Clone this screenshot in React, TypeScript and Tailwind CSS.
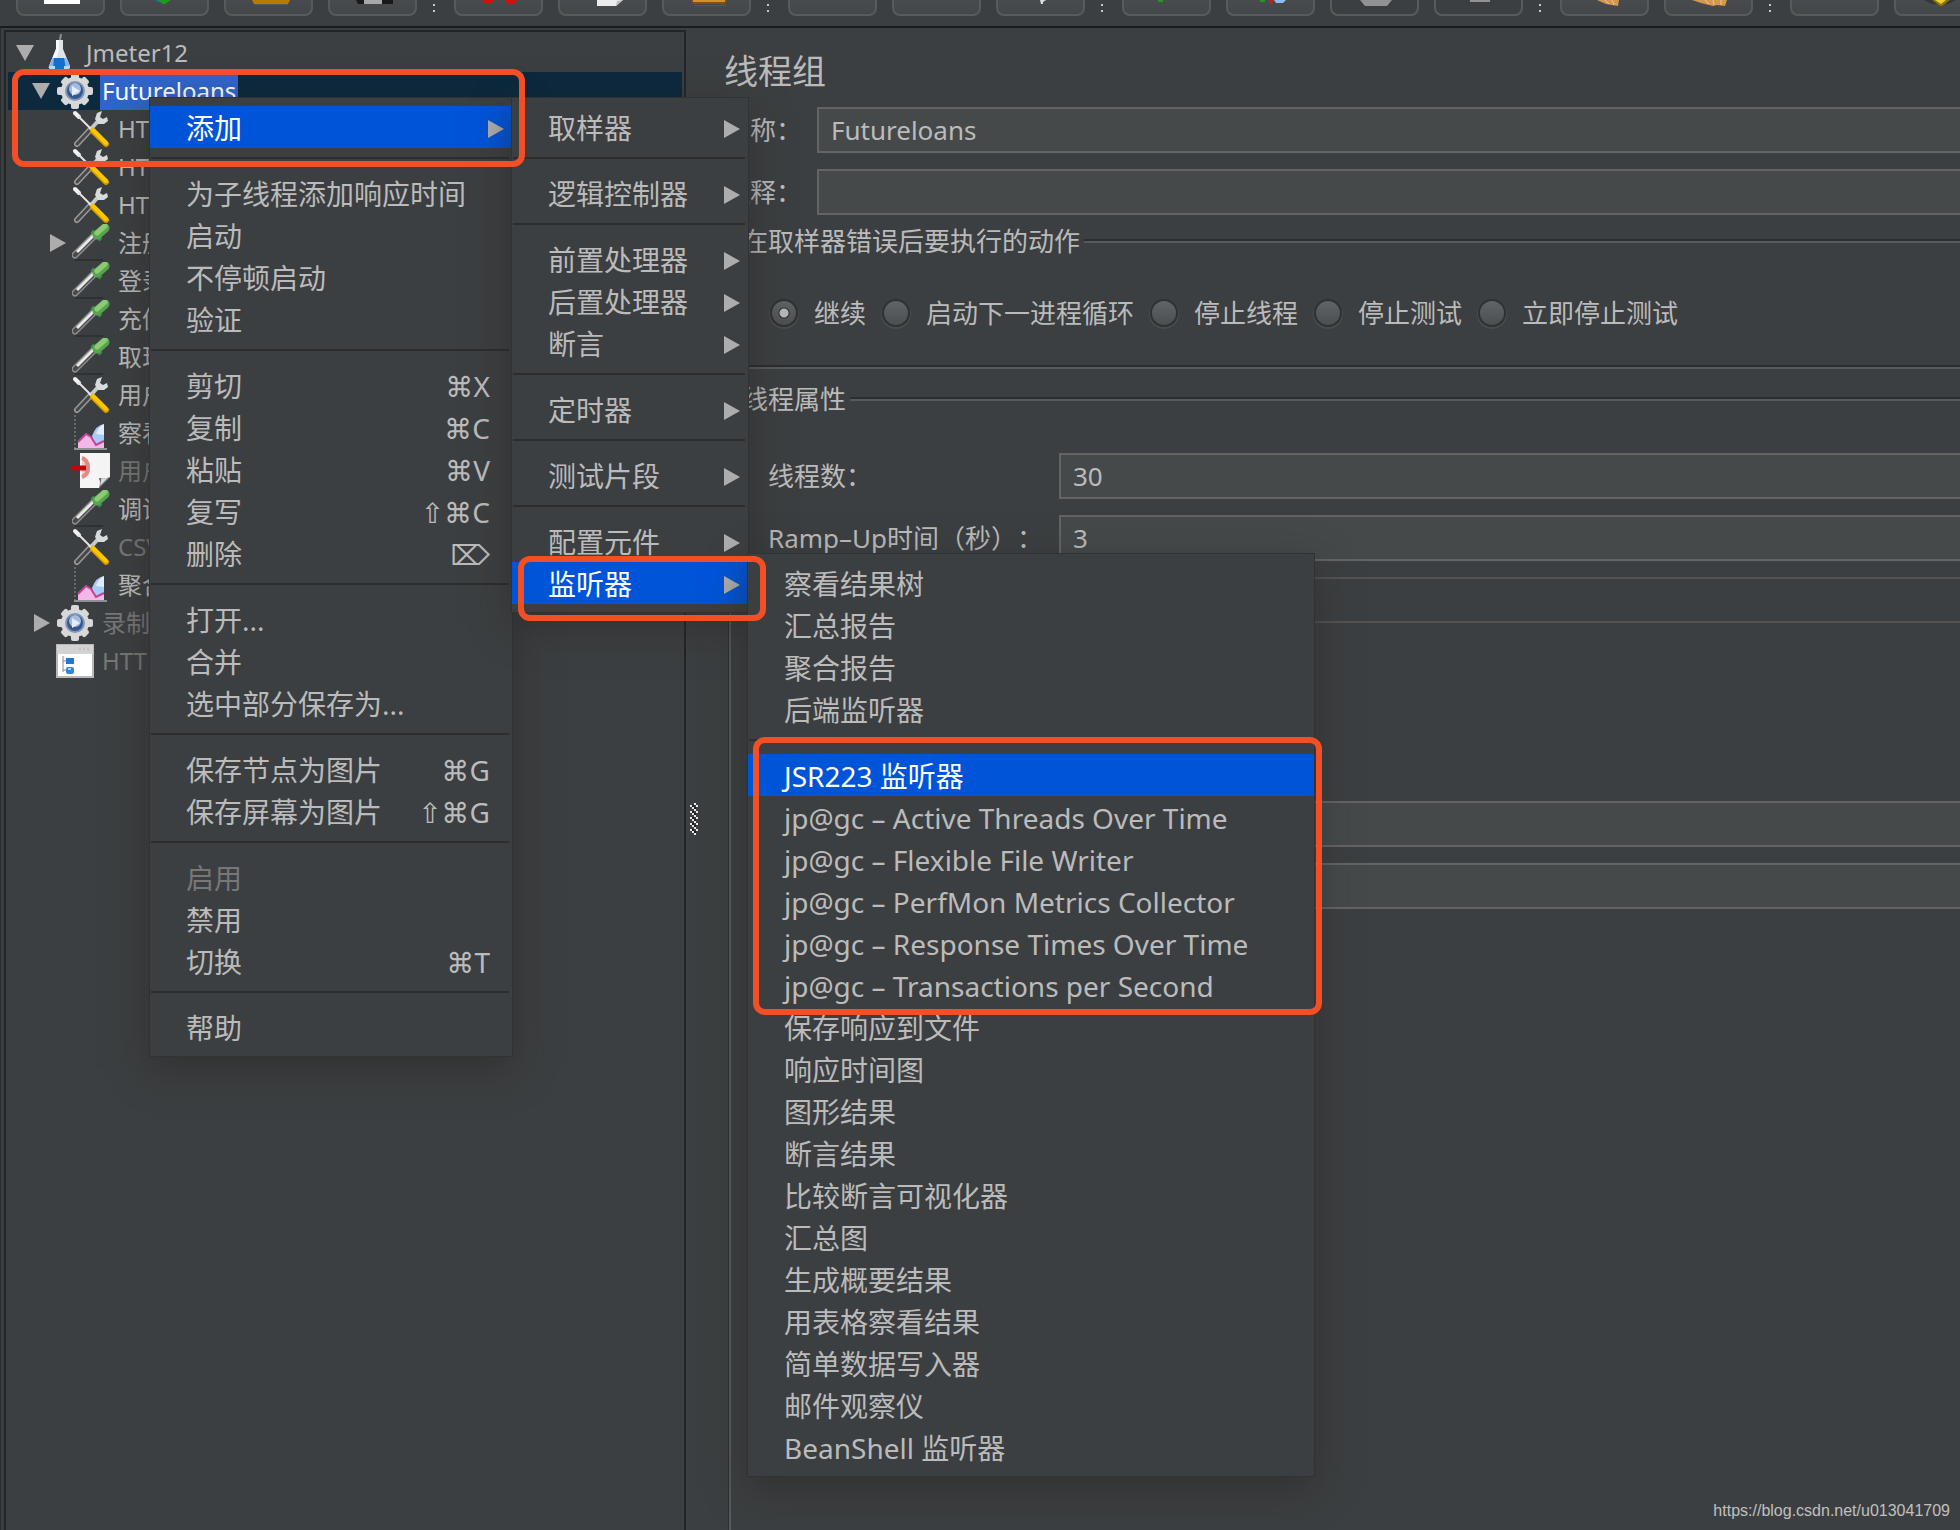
import React from "react";
import clsx from "clsx";

type IconName = "flask" | "gear" | "tools" | "dropper" | "chart" | "page" | "window";

interface ITreeNode {
  label: string;
  icon: IconName;
  level: 0 | 1 | 2;
  arrow?: "down" | "right";
  selected?: boolean;
  disabled?: boolean;
}

interface IMenuItem {
  label: string;
  shortcut?: string;
  submenu?: boolean;
  active?: boolean;
  disabled?: boolean;
}

const treeNodes: ITreeNode[] = [
  { label: "Jmeter12", icon: "flask", level: 0, arrow: "down" },
  { label: "Futureloans", icon: "gear", level: 1, arrow: "down", selected: true },
  { label: "HTTP", icon: "tools", level: 2 },
  { label: "HTTP", icon: "tools", level: 2 },
  { label: "HTTP", icon: "tools", level: 2 },
  { label: "注册", icon: "dropper", level: 2, arrow: "right" },
  { label: "登录", icon: "dropper", level: 2 },
  { label: "充值", icon: "dropper", level: 2 },
  { label: "取现", icon: "dropper", level: 2 },
  { label: "用户", icon: "tools", level: 2 },
  { label: "察看", icon: "chart", level: 2 },
  { label: "用户", icon: "page", level: 2, disabled: true },
  { label: "调试", icon: "dropper", level: 2 },
  { label: "CSV", icon: "tools", level: 2, disabled: true },
  { label: "聚合", icon: "chart", level: 2 },
  { label: "录制", icon: "gear", level: 1, arrow: "right", disabled: true },
  { label: "HTTP", icon: "window", level: 1, disabled: true },
];

// every inner array is one group, groups are split by a separator line
const contextMenu: IMenuItem[][] = [
  [{ label: "添加", submenu: true, active: true }],
  [
    { label: "为子线程添加响应时间" },
    { label: "启动" },
    { label: "不停顿启动" },
    { label: "验证" },
  ],
  [
    { label: "剪切", shortcut: "⌘X" },
    { label: "复制", shortcut: "⌘C" },
    { label: "粘贴", shortcut: "⌘V" },
    { label: "复写", shortcut: "⇧⌘C" },
    { label: "删除", shortcut: "⌦" },
  ],
  [{ label: "打开..." }, { label: "合并" }, { label: "选中部分保存为..." }],
  [
    { label: "保存节点为图片", shortcut: "⌘G" },
    { label: "保存屏幕为图片", shortcut: "⇧⌘G" },
  ],
  [
    { label: "启用", disabled: true },
    { label: "禁用" },
    { label: "切换", shortcut: "⌘T" },
  ],
  [{ label: "帮助" }],
];

const addMenu: IMenuItem[][] = [
  [{ label: "取样器", submenu: true }],
  [{ label: "逻辑控制器", submenu: true }],
  [
    { label: "前置处理器", submenu: true },
    { label: "后置处理器", submenu: true },
    { label: "断言", submenu: true },
  ],
  [{ label: "定时器", submenu: true }],
  [{ label: "测试片段", submenu: true }],
  [
    { label: "配置元件", submenu: true },
    { label: "监听器", submenu: true, active: true },
  ],
];

const listenerMenu: IMenuItem[][] = [
  [
    { label: "察看结果树" },
    { label: "汇总报告" },
    { label: "聚合报告" },
    { label: "后端监听器" },
  ],
  [
    { label: "JSR223 监听器", active: true },
    { label: "jp@gc – Active Threads Over Time" },
    { label: "jp@gc – Flexible File Writer" },
    { label: "jp@gc – PerfMon Metrics Collector" },
    { label: "jp@gc – Response Times Over Time" },
    { label: "jp@gc – Transactions per Second" },
    { label: "保存响应到文件" },
    { label: "响应时间图" },
    { label: "图形结果" },
    { label: "断言结果" },
    { label: "比较断言可视化器" },
    { label: "汇总图" },
    { label: "生成概要结果" },
    { label: "用表格察看结果" },
    { label: "简单数据写入器" },
    { label: "邮件观察仪" },
    { label: "BeanShell 监听器" },
  ],
];

const errorActions = ["继续", "启动下一进程循环", "停止线程", "停止测试", "立即停止测试"];

const NodeIcon = ({ name }: { name: IconName }) => {
  switch (name) {
    case "flask":
      return (
        <>
          <path d="M20 6 L21 0" stroke="#8d8f90" strokeWidth="2" />
          <path d="M16 6 h7 v9 l7 17 q0 3 -2 3 h-17 q-3 0 -2 -3 l7 -17z" fill="#dfe3e8" />
          <path d="M16 6 h3 v10 l-4 14 h-5 l6 -15z" fill="#f7f8fa" />
          <path d="M12.500 24 h13.500 l4 8 q0 3 -2 3 h-17 q-3 0 -2 -3z" fill="#7fb4ee" />
          <path d="M14 24 h10 l2 11 h-13z" fill="#1270d0" />
          <path d="M9 32 q0 3 2 3 h4 v-3z M24 32 h6 q0 3 -2 3 h-4z" fill="#b9d7f7" />
        </>
      );
    case "gear":
      return (
        <>
          <g fill="#d8d8d8">
            <rect x="15" y="1" width="8" height="36" rx="2" />
            <rect x="1" y="15" width="36" height="8" rx="2" />
            <rect x="15" y="2" width="8" height="34" rx="2" transform="rotate(45 19 19)" />
            <rect x="15" y="2" width="8" height="34" rx="2" transform="rotate(-45 19 19)" />
            <circle cx="19" cy="19" r="14" />
          </g>
          <circle cx="19" cy="19" r="10" fill="#8296b8" />
          <circle cx="19" cy="19" r="8" fill="#34588f" />
          <circle cx="19" cy="17" r="6" fill="#a3bbdf" />
          <path d="M16 14 L24 19 L16 24z" fill="#e9eef6" />
        </>
      );
    case "tools":
      return (
        <>
          <path d="M5 34 L18 20" stroke="#9a9a9a" strokeWidth="6" strokeLinecap="round" />
          <path d="M5 34 L19 19" stroke="#474747" strokeWidth="3" strokeLinecap="round" />
          <path d="M18 20 L27 10" stroke="#c9c9c9" strokeWidth="4" />
          <path d="M30 1 L25 3 L23 9 L26 14 L32 14 L36 11 L35 7 L31 9 L28 7z" fill="#d9dcdd" />
          <path d="M3 3 L7 7" stroke="#f2f2f2" strokeWidth="4" strokeLinecap="round" />
          <path d="M6 6 L20 20" stroke="#e4e4e4" strokeWidth="2" />
          <path d="M21 21 L34 34" stroke="#d59b00" strokeWidth="6" strokeLinecap="round" />
          <path d="M21 20 L34 33" stroke="#fdc800" strokeWidth="4" strokeLinecap="round" />
        </>
      );
    case "dropper":
      return (
        <>
          <path d="M3 36 h28" stroke="#2f3133" strokeWidth="2" />
          <path d="M3 31 L23 11" stroke="#8d8d8d" strokeWidth="7" strokeLinecap="round" />
          <path d="M3 31 L23 11" stroke="#4a4a4a" strokeWidth="4" strokeLinecap="round" />
          <path d="M5 28 L23 10" stroke="#e9e9e9" strokeWidth="3" />
          <path d="M20 7 L29 16" stroke="#3f8f42" strokeWidth="4" />
          <path d="M25 11 L33 4" stroke="#57a64f" strokeWidth="9" strokeLinecap="round" />
          <path d="M25 9 L33 2" stroke="#8fcb76" strokeWidth="5" strokeLinecap="round" />
        </>
      );
    case "chart":
      return (
        <>
          <path d="M3 1 V34" stroke="#67696b" strokeWidth="2" strokeDasharray="2 2" />
          <path d="M2 35 H35" stroke="#8e9092" strokeWidth="2" />
          <path d="M32 10 q-8 1 -12 12 l3 12 h9z" fill="#a9cbfb" />
          <path d="M32 10 q-6 3 -8 10 l8 1z" fill="#e1eefe" />
          <path d="M6 34 v-6 l8 -8 l6 4 l5 7 l7 -3 v6z" fill="#f3b7e8" />
          <path d="M6 28 l8 -8 l5 3 l5 8 l8 -4" fill="none" stroke="#c2438f" strokeWidth="2" />
        </>
      );
    case "page":
      return (
        <>
          <path d="M8 1 h30 v24 l-11 11 h-19z" fill="#f5f5f5" />
          <path d="M27 36 q2 -5 0 -10 q6 2 11 -1z" fill="#4a4a4a" />
          <path d="M28 34 l1 -7 l7 -1z" fill="#dcdcdc" />
          <path d="M10 5 q8 2 8 11 q0 8 -8 10" fill="#f6c9c4" />
          <path d="M10 6 q6 2 6 10 q0 7 -6 9" fill="none" stroke="#e08a84" strokeWidth="4" />
          <path d="M0 16 h14" stroke="#c00808" strokeWidth="5" />
        </>
      );
    case "window":
      return (
        <>
          <rect x="1" y="3" width="36" height="32" fill="#ffffff" stroke="#b9b9b9" strokeWidth="2" />
          <rect x="1" y="3" width="36" height="9" fill="#d3d3d3" />
          <path d="M23 7 h12" stroke="#c4c4c4" strokeWidth="3" strokeDasharray="2 2" />
          <path d="M7 14 V30 M7 19 h4 M7 28 h4" stroke="#8a8a8a" strokeWidth="1" fill="none" />
          <rect x="10" y="16" width="8" height="6" fill="#1f78d8" />
          <rect x="10" y="25" width="8" height="7" rx="2" fill="#2f86df" />
          <rect x="12" y="26" width="3" height="2" fill="#a7d0f7" />
        </>
      );
  }
};

const TreeRow = ({ node }: { node: ITreeNode }) => (
  <li
    role="treeitem"
    aria-selected={!!node.selected}
    className={clsx(
      "flex h-[38px] items-center",
      node.level === 0 && "pl-2",
      node.level === 1 && "pl-6",
      node.level === 2 && "pl-10",
      node.selected && "bg-[#0d293e]"
    )}
  >
    <svg className="h-5 w-6 shrink-0" viewBox="0 0 24 20" fill="#adadad">
      {node.arrow === "down" && <path d="M0 2 H18 L9 18z" />}
      {node.arrow === "right" && <path d="M2 1 L18 10 L2 19z" />}
    </svg>
    <svg className="mr-1.5 size-[38px] shrink-0" viewBox="0 0 38 38" fill="none">
      <NodeIcon name={node.icon} />
    </svg>
    <span
      className={clsx(
        "px-0.5 text-[24px] leading-[38px] whitespace-nowrap",
        node.selected && "bg-[#2f65ca] text-white",
        node.disabled && "text-[#777777]"
      )}
    >
      {node.label}
    </span>
  </li>
);

const Menu = ({
  groups,
  label,
  className,
}: {
  groups: IMenuItem[][];
  label: string;
  className: string;
}) => (
  <div
    role="menu"
    aria-label={label}
    className={clsx(
      "absolute bg-[#3c3f41] py-2 text-[28px] shadow-[0_0_0_1px_#303234,0_12px_36px_rgba(40,36,34,0.55)]",
      className
    )}
  >
    {groups.map((group, index) => (
      <React.Fragment key={index}>
        {index > 0 && (
          <div role="separator" className="mr-[3px] ml-px h-6 pt-[9px]">
            <div className="h-0.5 bg-[#2d2d2d]"></div>
          </div>
        )}
        {group.map((item) => (
          <button
            key={item.label}
            type="button"
            role="menuitem"
            disabled={item.disabled}
            className={clsx(
              "flex h-[42px] w-full items-center justify-between pt-0.5 pl-9 text-left leading-10 whitespace-nowrap",
              item.submenu ? "pr-2" : "pr-[22px]",
              item.active && "bg-[#0054d8] text-white",
              item.disabled && "text-[#777777]"
            )}
          >
            <span>{item.label}</span>
            {item.shortcut && (
              <span className="font-['Noto_Sans','DejaVu_Sans',sans-serif]">{item.shortcut}</span>
            )}
            {item.submenu && (
              <svg className="h-5 w-4" viewBox="0 0 16 20" fill="#adadad">
                <path d="M0 2 L16 11 L0 20z" />
              </svg>
            )}
          </button>
        ))}
      </React.Fragment>
    ))}
  </div>
);

const ToolButton = ({
  label,
  disabled,
  children,
}: {
  label: string;
  disabled?: boolean;
  children?: React.ReactNode;
}) => (
  <button
    type="button"
    aria-label={label}
    disabled={disabled}
    className={clsx(
      "flex h-10 w-[89px] shrink-0 items-end rounded-lg border-2 border-[#585a5b]",
      !disabled && "bg-linear-to-b from-[#4e5254] to-[#434749]"
    )}
  >
    <svg className="h-[14px] w-[85px]" viewBox="0 0 85 14">
      {children}
    </svg>
  </button>
);

const ToolDivider = () => (
  <svg className="h-4 w-[7px] shrink-0" viewBox="0 0 7 16" fill="#c8c8c8">
    <path d="M1 4 h2 v2 h-2z M1 10 h2 v2 h-2z" />
  </svg>
);

const Toolbar = () => (
  <header className="flex h-7 shrink-0 items-end gap-[15px] overflow-hidden border-b-2 border-[#1a1d1f] pb-[10px] pl-4">
    <ToolButton label="新建">
      <path d="M26 0 h36 v4 h-36z" fill="#ffffff" />
    </ToolButton>
    <ToolButton label="模板">
      <path d="M33 0 h6 v2 h-4z" fill="#1d5fae" />
      <path d="M35 0 h14 l-6 4 h-2z" fill="#1e9a1e" />
    </ToolButton>
    <ToolButton label="打开">
      <path d="M28 4 h34 v1 h-34z" fill="#55585a" />
      <path d="M26 0 h38 l-2 4 h-34z" fill="#b87a05" />
    </ToolButton>
    <ToolButton label="保存">
      <path d="M26 0 h37 v4 h-35z" fill="#191919" />
      <path d="M34 0 h18 v4 h-18z" fill="#a8a8a8" />
    </ToolButton>
    <ToolDivider />
    <ToolButton label="剪切">
      <path d="M26 0 h12 l-3 4 h-6z M49 0 h12 l-3 4 h-6z" fill="#d41010" />
    </ToolButton>
    <ToolButton label="复制">
      <path d="M37 0 h26 l-7 6 h-19z" fill="#ececec" />
      <path d="M56 6 l1 -5 l6 -1z" fill="#bdbdbd" />
    </ToolButton>
    <ToolButton label="粘贴">
      <path d="M30 5 h32 v1 h-32z" fill="#55585a" />
      <path d="M27 0 h36 l-2 4 h-32z" fill="#8a4f05" />
      <path d="M29 0 h32 v2 h-32z" fill="#cf9030" />
    </ToolButton>
    <ToolDivider />
    <ToolButton label="展开" />
    <ToolButton label="折叠" />
    <ToolButton label="切换">
      <path d="M42 0 h6 l-3 2 v2 h-2z" fill="#dcdcdc" />
    </ToolButton>
    <ToolDivider />
    <ToolButton label="启动">
      <path d="M34 0 h5 v2 h-5z" fill="#2a9226" />
    </ToolButton>
    <ToolButton label="不停顿启动">
      <path d="M32 0 h5 v2 h-5z" fill="#2a9226" />
      <path d="M41 0 h6 l-5 4z" fill="#c42020" />
      <path d="M46 0 h12 l-3 3 h-7z" fill="#8dbcf0" />
    </ToolButton>
    <ToolButton label="停止" disabled>
      <path d="M28 0 h32 l-5 6 h-22z" fill="#929292" />
    </ToolButton>
    <ToolButton label="关闭" disabled>
      <path d="M34 0 h20 v2 h-20z" fill="#929292" />
    </ToolButton>
    <ToolDivider />
    <ToolButton label="清除">
      <path d="M35 0 h22 l-1 6 l-12 -2z" fill="#d3974f" />
      <path d="M43 0 l4 4 M50 0 l2 5" stroke="#efc58a" />
    </ToolButton>
    <ToolButton label="清除全部">
      <path d="M26 0 h35 l-2 6 l-8 -1 l-4 1 l-12 -3z" fill="#d3974f" />
      <path d="M39 0 l4 4 M47 0 l1 5 M55 0 v5" stroke="#efc58a" />
    </ToolButton>
    <ToolDivider />
    <ToolButton label="搜索" />
    <ToolButton label="重置搜索">
      <path d="M28 0 h32 l-8 4 h-16z" fill="#33363a" />
      <path d="M36 0 h18 l-8 6 h-2z" fill="#8a7408" />
      <path d="M39 0 h11 l-5 4z" fill="#ecd02c" />
    </ToolButton>
  </header>
);

const TextRow = ({
  id,
  label,
  value,
  wide,
}: {
  id: string;
  label: string;
  value?: string;
  wide?: boolean;
}) => (
  <div className="flex h-[46px] items-center">
    <label
      htmlFor={id}
      className={clsx("shrink-0 [text-spacing-trim:space-all]", wide ? "w-[291px]" : "w-[93px]")}
    >
      {label}
    </label>
    <input
      id={id}
      type="text"
      defaultValue={value}
      className="h-full min-w-0 flex-1 border-2 border-[#646464] bg-[#45494a] px-3 outline-none"
    />
  </div>
);

const EmptyRow = ({ label, disabled }: { label: string; disabled?: boolean }) => (
  <div className="flex h-[46px] pl-[291px]">
    <input
      type="text"
      aria-label={label}
      disabled={disabled}
      className={clsx(
        "h-full min-w-0 flex-1 border-2",
        disabled ? "border-[#555352]" : "border-[#646464] bg-[#45494a]"
      )}
    />
  </div>
);

// titled group with an etched line running on from its title
const TitledGroup = ({
  title,
  className,
  children,
}: {
  title: string;
  className: string;
  children: React.ReactNode;
}) => (
  <fieldset
    className={clsx(
      "ml-[5px] min-w-0 border-l-2 border-[#565a5c] pl-[11px] shadow-[-1px_0_0_#2d3032]",
      className
    )}
  >
    <legend className="flex w-full items-center gap-1 leading-[34px]">
      <span>{title}</span>
      <span className="h-1 flex-1 border-t-2 border-b-2 border-t-[#2b2d2f] border-b-[#565a5c]"></span>
    </legend>
    {children}
  </fieldset>
);

const ThreadGroupForm = () => (
  <form className="-mr-4 flex min-w-0 flex-1 flex-col pt-[21px] pl-6">
    <h1 className="mb-3.5 text-[34px] leading-[44px]">线程组</h1>
    <div className="flex flex-col gap-4">
      <TextRow id="name" label="名称：" value="Futureloans" />
      <TextRow id="comment" label="注释：" />
    </div>
    <TitledGroup title="在取样器错误后要执行的动作" className="mt-[9px] border-b-2">
      <div className="flex h-[109px] items-start gap-4 border-b-2 border-[#2b2d2f] pt-[38px] pl-7">
        {errorActions.map((action, index) => (
          <label key={action} className="flex items-center gap-4 whitespace-nowrap">
            <input
              type="radio"
              name="onError"
              defaultChecked={index === 0}
              className="size-7 shrink-0 appearance-none rounded-full border-2 border-[#2f3133] bg-linear-to-b from-[#5f6467] to-[#4b4f52] shadow-[0_1px_0_1px_#4a4c4e] checked:bg-[radial-gradient(circle_at_center,#b8b8b8_4px,#2d2f31_5px,transparent_6px),linear-gradient(#5f6467,#4b4f52)]"
            />
            <span className="leading-[34px]">{action}</span>
          </label>
        ))}
      </div>
    </TitledGroup>
    <TitledGroup title="线程属性" className="mt-[13px] flex-1">
      <div className="flex flex-col gap-4 pt-[37px] pl-[26px]">
        <TextRow id="threads" label="线程数：" value="30" wide />
        <TextRow id="rampUp" label="Ramp–Up时间（秒）：" value="3" wide />
        <EmptyRow label="循环次数" disabled />
      </div>
      <div className="mt-[178px] flex flex-col gap-4 pl-[26px]">
        <EmptyRow label="持续时间" />
        <EmptyRow label="启动延迟" />
      </div>
    </TitledGroup>
  </form>
);

const SplitGrip = () => (
  <div className="w-3.5 shrink-0 pt-[775px] pl-1">
    <svg className="h-8 w-2" viewBox="0 0 8 32">
      <defs>
        <pattern id="grip" width="8" height="6" patternUnits="userSpaceOnUse">
          <path d="M4 0 h2 v2 h-2z M0 2 h2 v2 h-2z M6 2 h2 v2 h-2z M2 4 h2 v2 h-2z" fill="#e8e8e8" />
          <path d="M2 2 h2 v2 h-2z M4 4 h2 v2 h-2z" fill="#191b1c" />
        </pattern>
      </defs>
      <rect width="8" height="32" fill="url(#grip)" />
    </svg>
  </div>
);

const App = () => {
  return (
    <div className="relative flex min-h-screen flex-col overflow-hidden bg-[#3c3f41] font-['Noto_Sans','Noto_Sans_CJK_SC','DejaVu_Sans',sans-serif] text-[26px] text-[#bbbbbb]">
      <Toolbar />
      <main className="flex flex-1">
        <aside className="flex w-[35%] shrink-0 border-l border-[#2a2c2e] pt-0.5 pl-[3px]">
          <ul role="tree" className="-mb-1 min-w-0 flex-1 border-2 border-[#232527] px-0.5 pt-0.5">
            {treeNodes.map((node, index) => (
              <TreeRow key={index} node={node} />
            ))}
          </ul>
        </aside>
        <SplitGrip />
        <ThreadGroupForm />
      </main>

      <Menu groups={contextMenu} label="右键菜单" className="top-[98px] left-[150px] w-[362px]" />
      <Menu groups={addMenu} label="添加" className="top-[98px] left-[512px] w-[236px]" />
      <Menu groups={listenerMenu} label="监听器" className="top-[554px] left-[748px] w-[566px]" />

      {/* highlight frames */}
      <div className="pointer-events-none absolute top-[69px] left-[12px] h-[98px] w-[513px] rounded-xl border-6 border-[#f24f26]"></div>
      <div className="pointer-events-none absolute top-[556px] left-[518px] h-[65px] w-[248px] rounded-xl border-6 border-[#f24f26]"></div>
      <div className="pointer-events-none absolute top-[737px] left-[753px] h-[278px] w-[569px] rounded-xl border-6 border-[#f24f26]"></div>

      <a
        href="https://blog.csdn.net/u013041709"
        className="absolute right-2.5 bottom-[7px] font-['Liberation_Sans',sans-serif] text-[16px] leading-6 text-[#c0c0c0]"
      >
        https://blog.csdn.net/u013041709
      </a>
    </div>
  );
};

export default App;
